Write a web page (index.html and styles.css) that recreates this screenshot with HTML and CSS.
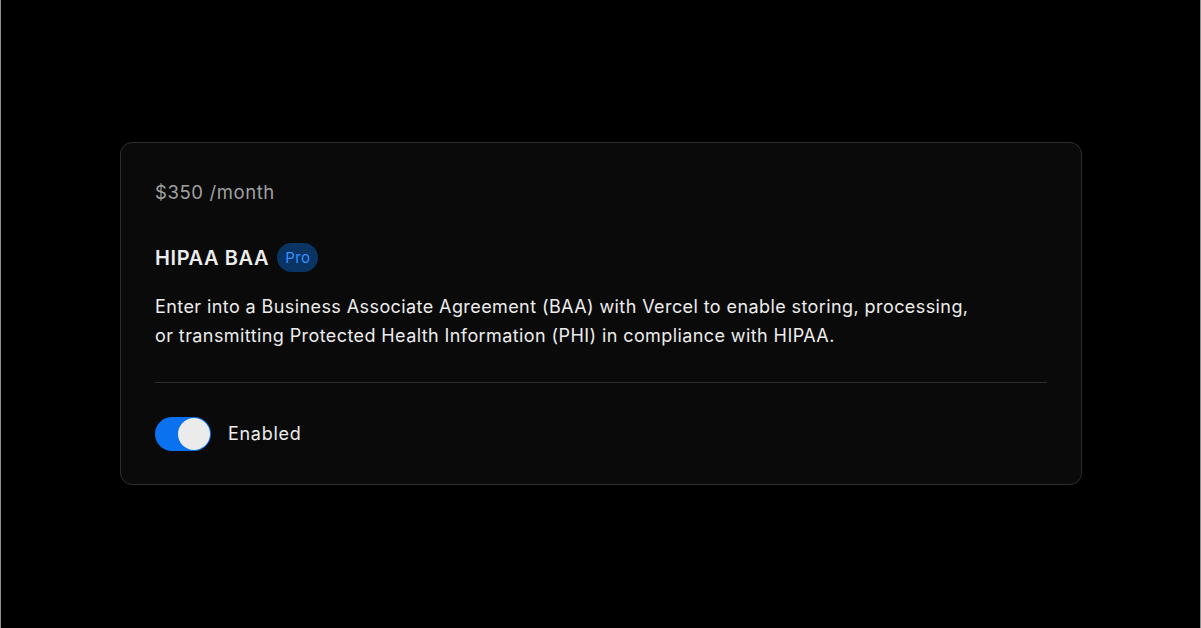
FILE: index.html
```html
<!DOCTYPE html>
<html lang="en">
<head>
  <meta charset="UTF-8">
  <meta name="viewport" content="width=device-width, initial-scale=1.0">
  <title>HIPAA BAA</title>
  <link rel="stylesheet" href="styles.css">
</head>
<body>
  <main class="stage">
    <section class="card">
      <p class="price">$350 /month</p>
      <div class="title-row">
        <h2 class="title">HIPAA BAA</h2>
        <span class="badge">Pro</span>
      </div>
      <p class="desc">Enter into a Business Associate Agreement (BAA) with Vercel to enable storing, processing,<br>or transmitting Protected Health Information (PHI) in compliance with HIPAA.</p>
      <hr class="divider">
      <label class="toggle-row">
        <span class="toggle"><span class="knob"></span></span>
        <span class="toggle-label">Enabled</span>
      </label>
    </section>
  </main>
</body>
</html>
```

FILE: styles.css
```css
html, body {
  margin: 0;
  height: 100%;
}

body {
  background-color: #000;
  font-family: Inter, "Noto Sans", sans-serif;
  color: #ededed;
  border-left: 1px solid #8f8f8f;
  border-right: 1px solid #8f8f8f;
  box-sizing: border-box;
}

.stage {
  padding: 142px 118px 0 119px;
}

.card {
  background-color: #0a0a0a;
  border: 1px solid #2e2e2e;
  border-radius: 12px;
  padding: 35px 34px 33px 34px;
  height: 343px;
  box-sizing: border-box;
}

.price {
  margin: 0;
  font-size: 18.5px;
  line-height: 28px;
  color: #a1a1a1;
  letter-spacing: 0.6px;
}

.title-row {
  display: flex;
  align-items: center;
  gap: 8px;
  margin-top: 37px;
}

.title {
  margin: 0;
  font-size: 20px;
  font-weight: 600;
  line-height: 28px;
  letter-spacing: 0.6px;
}

.badge {
  background-color: #0a3464;
  color: #3590ff;
  font-size: 15px;
  line-height: 29px;
  padding: 0 8px;
  border-radius: 15px;
  letter-spacing: 0.4px;
}

.desc {
  margin: 20px 0 0 0;
  font-size: 18px;
  line-height: 29px;
  color: #ededed;
  letter-spacing: 0.41px;
}

.divider {
  border: none;
  border-top: 1px solid #2e2e2e;
  margin: 32px 0 34px 0;
}

.toggle-row {
  display: flex;
  align-items: center;
  gap: 17px;
}

.toggle {
  width: 56px;
  height: 34px;
  border-radius: 17px;
  background-color: #0a72ef;
  display: flex;
  align-items: center;
  justify-content: flex-end;
  padding: 1px;
  box-sizing: border-box;
}

.knob {
  width: 32px;
  height: 32px;
  border-radius: 50%;
  background-color: #ebebeb;
}

.toggle-label {
  font-size: 18px;
  line-height: 28px;
  letter-spacing: 0.7px;
}
```
